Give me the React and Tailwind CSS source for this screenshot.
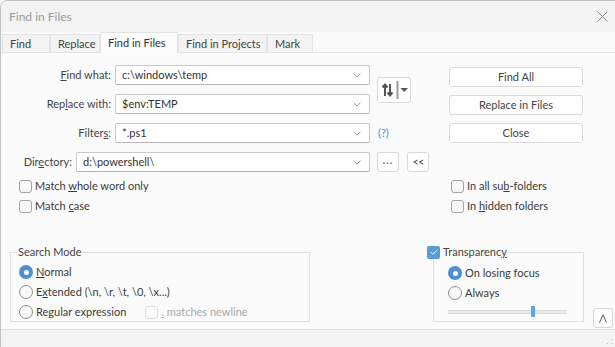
import React from 'react';

// small building blocks of the dialog
function Combo({ value, width }) {
  return (
    <div
      className="h-[20px] bg-white border border-[#c9c9c9] border-b-[#b5b5b5] rounded-[2px] flex items-center pl-[6px] pr-[8px]"
      style={{ width }}
    >
      <span className="flex-1 text-[#333]">{value}</span>
      <svg width="8" height="5" viewBox="0 0 8 5" aria-hidden>
        <polyline points="0.5,0.5 4,4 7.5,0.5" fill="none" stroke="#a0a0a0" strokeWidth="1" />
      </svg>
    </div>
  );
}

function Btn({ children, className = '' }) {
  return (
    <div
      className={`h-[20px] bg-white border border-[#dadada] rounded-[3px] flex items-center justify-center text-[#444] ${className}`}
    >
      {children}
    </div>
  );
}

function Check({ checked = false, disabled = false }) {
  if (checked) {
    return (
      <span className="w-[13px] h-[13px] rounded-[2px] bg-[#5b9bd5] flex items-center justify-center shrink-0">
        <svg width="8" height="6" viewBox="0 0 8 6" aria-hidden>
          <polyline points="0.5,3 3,5.2 7.5,0.8" fill="none" stroke="#eaf2fb" strokeWidth="1" />
        </svg>
      </span>
    );
  }
  return (
    <span
      className={`w-[13px] h-[13px] rounded-[3px] border shrink-0 ${
        disabled ? 'border-[#dcdcdc] bg-[#fbfbfb]' : 'border-[#a3a3a3] bg-[#f7f7f7]'
      }`}
    />
  );
}

function Radio({ checked = false }) {
  if (checked) {
    return (
      <span className="w-[14px] h-[14px] rounded-full bg-[#4d8fd6] flex items-center justify-center shrink-0">
        <span className="w-[5px] h-[5px] rounded-full bg-white" />
      </span>
    );
  }
  return <span className="w-[14px] h-[14px] rounded-full border border-[#8f8f8f] bg-[#f8f8f8] shrink-0" />;
}

function Row({ children, className = '' }) {
  return <div className={`h-[20px] flex items-center gap-[3px] ${className}`}>{children}</div>;
}

const tabs = [
  { label: 'Find', w: 'w-[48px]' },
  { label: 'Replace', w: 'w-[50px]' },
  { label: 'Find in Files', w: 'w-[78px]', active: true },
  { label: 'Find in Projects', w: 'w-[89px]' },
  { label: 'Mark', w: 'w-[46px]' },
];

export default function App() {
  return (
    <div className="w-[615px] h-[347px] overflow-hidden flex flex-col bg-[#fbfbfb] border-l border-t border-[#c2c2c2] rounded-tl-[7px] text-[11px] leading-[14px] text-[#3a3a3a] [font-family:Lato,'Noto_Sans',sans-serif]">
      {/* title bar */}
      <div className="h-[31px] shrink-0 bg-[#f3f3f3] flex items-center pl-[8px] pr-[7px]">
        <span className="flex-1 text-[#9a9a9a] text-[12px]">Find in Files</span>
        <svg width="11" height="11" viewBox="0 0 11 11" aria-hidden>
          <path d="M0.5 0.5 L10.5 10.5 M10.5 0.5 L0.5 10.5" stroke="#8c8c8c" strokeWidth="1" />
        </svg>
      </div>

      {/* tabs */}
      <div className="h-[21px] shrink-0 bg-[#fafafa] border-b border-[#e3e3e3] flex items-end pl-[1px]">
        {tabs.map((t) => (
          <div
            key={t.label}
            className={`${t.w} flex items-center pl-[7px] whitespace-nowrap border border-b-0 border-[#e3e3e3] ${
              t.active ? 'h-[21px] -mb-px bg-[#fcfcfc] text-[#333]' : 'h-[18px] bg-[#f3f3f3] text-[#444]'
            }`}
          >
            {t.label}
          </div>
        ))}
      </div>

      {/* content */}
      <div className="flex-1 flex flex-col">
        <div className="flex mt-[12px]">
          {/* form */}
          <div className="w-[448px] flex flex-col">
            <div className="flex items-center">
              <div className="flex flex-col gap-[9px]">
                <div className="flex items-center gap-[4px]">
                  <span className="w-[110px] text-right text-[#444]">
                    <u>F</u>ind what:
                  </span>
                  <Combo value="c:\windows\temp" width={255} />
                </div>
                <div className="flex items-center gap-[4px]">
                  <span className="w-[110px] text-right text-[#444]">
                    Rep<u>l</u>ace with:
                  </span>
                  <Combo value="$env:TEMP" width={255} />
                </div>
              </div>
              <div className="ml-[7px] w-[34px] h-[26px] bg-white border border-[#dadada] rounded-[3px] flex items-center pl-[2px]">
                <svg width="30" height="20" viewBox="0 0 30 20" aria-hidden>
                  <path d="M5 16 V5 M2.5 7.5 L5 4.5 L7.5 7.5" fill="none" stroke="#555" strokeWidth="2" />
                  <path d="M10 4 V15 M7.5 12.5 L10 15.5 L12.5 12.5" fill="none" stroke="#555" strokeWidth="2" />
                  <line x1="17.5" y1="1" x2="17.5" y2="19" stroke="#9a9a9a" strokeWidth="2" />
                  <polygon points="20.5,8 28,8 24.25,12" fill="#555" />
                </svg>
              </div>
            </div>

            <div className="flex items-center gap-[4px] mt-[9px]">
              <span className="w-[110px] text-right text-[#444]">
                Filter<u>s</u>:
              </span>
              <Combo value="*.ps1" width={255} />
              <span className="ml-[4px] text-[#4a90d9]">(?)</span>
            </div>

            <div className="flex items-center gap-[4px] mt-[9px]">
              <span className="w-[71px] text-right text-[#444]">
                Dir<u>e</u>ctory:
              </span>
              <Combo value="d:\powershell\" width={294} />
              <Btn className="ml-[3px] w-[22px] pb-[4px] tracking-[1px]">...</Btn>
              <Btn className="ml-[4px] w-[22px] tracking-[-1px]">&lt;&lt;</Btn>
            </div>
          </div>

          {/* action buttons */}
          <div className="w-[134px] mt-[2px] flex flex-col gap-[8px]">
            <Btn>Find All</Btn>
            <Btn>Replace in Files</Btn>
            <Btn>Close</Btn>
          </div>
        </div>

        {/* option checkboxes */}
        <div className="flex mt-[4px]">
          <div className="w-[448px] pl-[18px]">
            <Row>
              <Check />
              <span>
                Match <u>w</u>hole word only
              </span>
            </Row>
            <Row>
              <Check />
              <span>
                Match <u>c</u>ase
              </span>
            </Row>
          </div>
          <div className="pl-[2px]">
            <Row>
              <Check />
              <span>
                In all su<u>b</u>-folders
              </span>
            </Row>
            <Row>
              <Check />
              <span>
                In <u>h</u>idden folders
              </span>
            </Row>
          </div>
        </div>

        {/* groups */}
        <div className="flex items-start mt-[29px]">
          <fieldset className="ml-[9px] w-[300px] h-[77px] border border-[#e0e0e0]">
            <legend className="ml-[6px] px-[1px] text-[#444]">Search Mode</legend>
            <div className="pl-[8px] pt-[3px]">
              <Row>
                <Radio checked />
                <span>
                  <u>N</u>ormal
                </span>
              </Row>
              <Row>
                <Radio />
                <span>
                  E<u>x</u>tended (\n, \r, \t, \0, \x...)
                </span>
              </Row>
              <Row>
                <Radio />
                <span>
                  Re<u>g</u>ular expression
                </span>
                <span className="ml-[16px] flex items-center gap-[3px] text-[#a8a8a8]">
                  <Check disabled />
                  <span>
                    <u>.</u> matches newline
                  </span>
                </span>
              </Row>
            </div>
          </fieldset>

          <fieldset className="ml-[123px] w-[151px] h-[77px] border border-[#e0e0e0]">
            <legend className="ml-[-7px] pr-[1px] flex items-center gap-[3px] text-[#444]">
              <Check checked />
              <span>
                Transparenc<u>y</u>
              </span>
            </legend>
            <div className="pl-[14px] pt-[4px]">
              <Row>
                <Radio checked />
                <span>On losing focus</span>
              </Row>
              <Row>
                <Radio />
                <span>Always</span>
              </Row>
              <div className="h-[18px] flex items-center">
                <div className="relative w-[118px] h-[4px] bg-[#e7e7e7] border border-[#dcdcdc]">
                  <span className="absolute left-[82px] top-[-5px] w-[4px] h-[11px] bg-[#5aa6e6]" />
                </div>
              </div>
            </div>
          </fieldset>

          <div className="ml-[9px] mt-[63px] w-[20px] h-[20px] bg-white border border-[#d6d6d6] rounded-[3px] flex items-center justify-center">
            <svg width="8" height="9" viewBox="0 0 8 9" aria-hidden>
              <polyline points="0.5,8.5 4,0.8 7.5,8.5" fill="none" stroke="#555" strokeWidth="1" />
            </svg>
          </div>
        </div>
      </div>

      {/* status strip */}
      <div className="h-[18px] shrink-0 border-t border-[#e3e3e3] bg-[#f3f3f3] flex justify-end items-end pr-[2px] pb-[2px]">
        <svg width="6" height="6" viewBox="0 0 6 6" aria-hidden>
          <rect x="4" y="0" width="1" height="1" fill="#c8c8c8" />
          <rect x="4" y="4" width="1" height="1" fill="#c8c8c8" />
          <rect x="0" y="4" width="1" height="1" fill="#c8c8c8" />
        </svg>
      </div>
    </div>
  );
}
